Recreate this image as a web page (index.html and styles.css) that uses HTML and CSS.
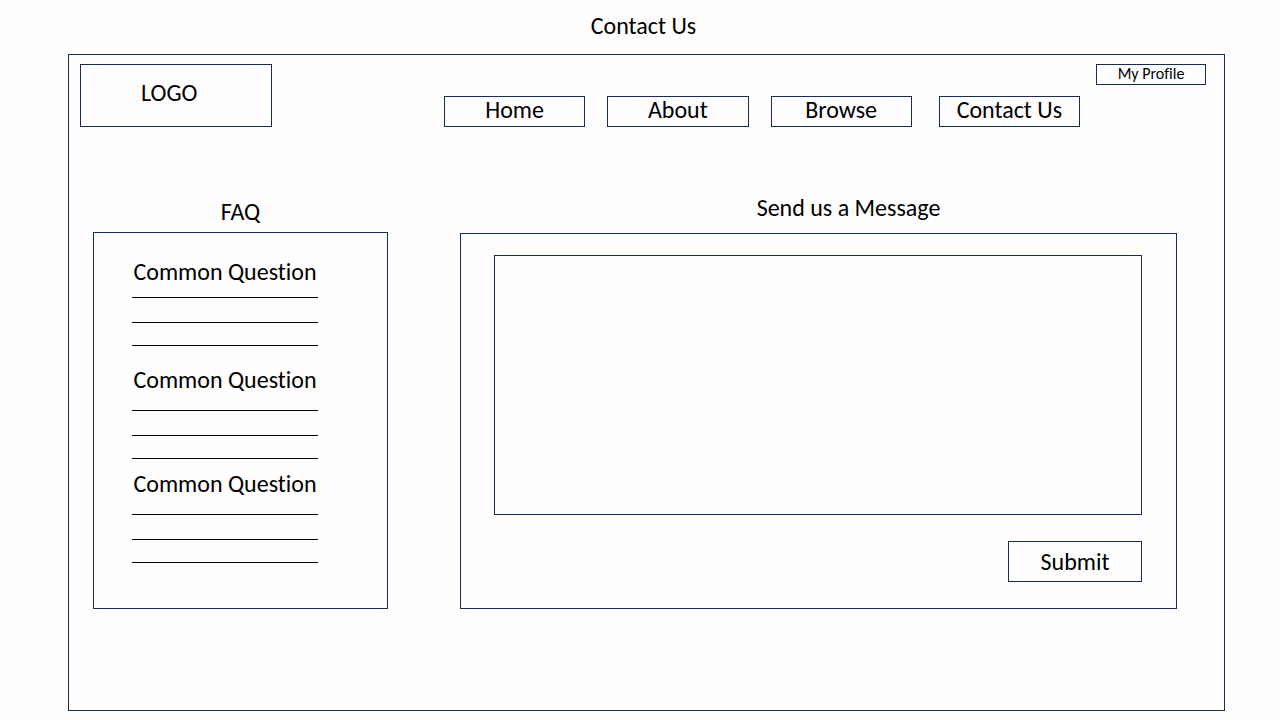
FILE: index.html
```html
<!DOCTYPE html>
<html lang="en">
<head>
<meta charset="utf-8">
<meta name="viewport" content="width=device-width, initial-scale=1">
<title>Contact Us</title>
<link rel="stylesheet" href="styles.css">
</head>
<body class="page">
<h1 class="page-title">Contact Us</h1>
<div class="frame">
  <header class="header">
    <div class="logo">LOGO</div>
    <nav class="nav" aria-label="Main">
      <a class="nav-link" href="#home">Home</a>
      <a class="nav-link" href="#about">About</a>
      <a class="nav-link" href="#browse">Browse</a>
      <a class="nav-link nav-link-last" href="#contact">Contact Us</a>
    </nav>
    <a class="profile" href="#profile">My Profile</a>
  </header>
  <main class="content">
    <section class="faq">
      <h2 class="heading">FAQ</h2>
      <div class="panel faq-panel">
        <article class="item item-first">
          <h3 class="question">Common Question</h3>
          <div class="answer"><div class="line"></div><div class="line"></div><div class="line"></div></div>
        </article>
        <article class="item">
          <h3 class="question">Common Question</h3>
          <div class="answer"><div class="line"></div><div class="line"></div><div class="line"></div></div>
        </article>
        <article class="item">
          <h3 class="question">Common Question</h3>
          <div class="answer"><div class="line"></div><div class="line"></div><div class="line"></div></div>
        </article>
      </div>
    </section>
    <section class="message">
      <h2 class="heading message-heading"><label for="message">Send us a Message</label></h2>
      <form class="panel message-panel">
        <textarea class="message-input" id="message" name="message"></textarea>
        <button class="submit" type="submit">Submit</button>
      </form>
    </section>
  </main>
</div>
</body>
</html>
```
FILE: styles.css
```css
* {
  box-sizing: border-box;
}

.page {
  --ink: #172c51;
  display: flex;
  flex-direction: column;
  min-height: 100vh;
  margin: 0;
  padding: 12px 55px 9px 62px;
  background: #fefefe;
  color: #000;
  font-family: Carlito, Lato, sans-serif;
  font-size: 24px;
  font-variant-ligatures: none;
  line-height: 28px;
}

.page-title,
.heading,
.question {
  margin: 0;
  font-size: 24px;
  font-weight: 400;
  line-height: 28px;
  text-align: center;
}

.page-title {
  margin-bottom: 14px;
}

.page-title {
  padding-right: 0;
}

.frame {
  display: flex;
  flex: 1;
  flex-direction: column;
  margin-left: 6px;
  border: 1px solid var(--ink);
}

.header {
  display: grid;
  grid-template-columns: 192px minmax(0, 1fr) 110px;
  padding: 9px 18px 0 11px;
}

.logo {
  height: 63px;
  padding: 14px 0 0 60px;
  border: 1px solid var(--ink);
}

.nav {
  display: flex;
  gap: 22px;
  align-self: end;
  margin: 0 16px 0 172px;
}

.nav-link,
.profile {
  border: 1px solid var(--ink);
  color: inherit;
  text-align: center;
  text-decoration: none;
  white-space: nowrap;
}

.nav-link {
  flex: 1 1 0;
  height: 31px;
  line-height: 26px;
}

.nav-link-last {
  margin-left: 5px;
}

.profile {
  align-self: start;
  height: 21px;
  font-size: 16px;
  line-height: 18px;
}

.content {
  display: grid;
  flex: 1;
  grid-template-columns: 295px minmax(0, 1fr);
  gap: 72px;
  padding: 67px 47px 101px 24px;
}

.faq,
.message {
  display: flex;
  flex-direction: column;
}

.panel {
  flex: 1;
  border: 1px solid var(--ink);
}

.faq {
  padding-top: 4px;
}

.faq .heading {
  margin-bottom: 6px;
}

.faq-panel {
  padding: 25px 69px 45px 38px;
}

.item {
  margin-bottom: 11px;
}

.item-first {
  margin-bottom: 20px;
}

.item:last-child {
  margin-bottom: 0;
}

.question {
  white-space: nowrap;
}

.answer {
  padding-top: 16px;
}

.item-first .answer {
  padding-top: 11px;
}

.line {
  height: 1px;
  margin-bottom: 24px;
  background: #000;
}

.line:nth-child(2) {
  margin-bottom: 22px;
}

.line:last-child {
  margin-bottom: 0;
}

.message-heading {
  margin-bottom: 11px;
  padding-left: 60px;
}

.message-panel {
  display: flex;
  flex-direction: column;
  gap: 26px;
  padding: 21px 34px 26px 33px;
}

.message-input {
  flex: 1;
  min-height: 120px;
  padding: 8px;
  border: 1px solid var(--ink);
  border-radius: 0;
  background: transparent;
  color: inherit;
  font: inherit;
  resize: none;
}

.submit {
  align-self: flex-end;
  width: 134px;
  height: 41px;
  padding: 0;
  border: 1px solid var(--ink);
  background: transparent;
  color: inherit;
  font: inherit;
}
```
